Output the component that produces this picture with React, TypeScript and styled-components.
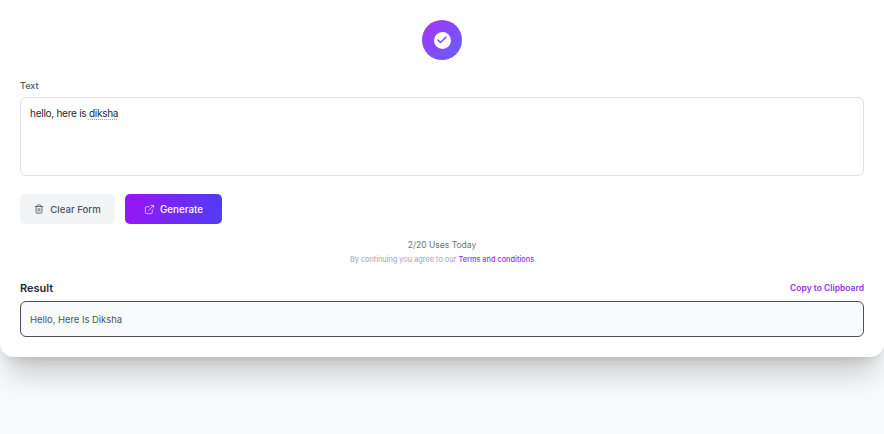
import React from 'react';
import styled, { createGlobalStyle } from 'styled-components';
import { Check, ExternalLink, Trash2 } from 'lucide-react';

const GlobalStyle = createGlobalStyle`
  html, body {
    margin: 0;
    padding: 0;
    height: 100%;
    background: #f9fafb;
    overflow: hidden;
    font-family: Inter, "Liberation Sans", sans-serif;
  }
`;

const Card = styled.main`
  box-sizing: border-box;
  height: 357px;
  padding: 20px 20px 0;
  background: #fff;
  border-radius: 0 0 14px 14px;
  box-shadow: 0 24px 30px -8px rgba(0, 0, 0, 0.2), 0 8px 12px -6px rgba(0, 0, 0, 0.12);
`;

const BadgeRow = styled.div`
  display: flex;
  justify-content: center;
  margin-bottom: 20px;
`;

const Badge = styled.div`
  display: flex;
  align-items: center;
  justify-content: center;
  width: 40px;
  height: 40px;
  border-radius: 50%;
  background: linear-gradient(135deg, #a932f5, #5f62ff);
`;

const BadgeDot = styled.div`
  display: flex;
  align-items: center;
  justify-content: center;
  width: 17px;
  height: 17px;
  border-radius: 50%;
  background: #fff;
  color: #6f4fe8;
`;

const FieldLabel = styled.label`
  display: block;
  margin-bottom: 6px;
  font-size: 9px;
  line-height: 11px;
  font-weight: 500;
  color: #4b5563;
`;

const TextBox = styled.div`
  box-sizing: border-box;
  height: 79px;
  padding: 8px 9px;
  border: 1px solid #e0e2e6;
  border-radius: 6px;
  background: #fff;
  font-size: 10px;
  letter-spacing: -0.26px;
  line-height: 14px;
  color: #1f2937;
`;

const Misspelled = styled.span`
  text-decoration: underline dotted #e58a8a;
  text-underline-offset: 2px;
`;

const Actions = styled.div`
  display: flex;
  gap: 10px;
  margin-top: 18px;
`;

const Button = styled.button<{ $primary?: boolean }>`
  display: flex;
  align-items: center;
  justify-content: center;
  gap: ${(p) => (p.$primary ? '5px' : '6px')};
  box-sizing: border-box;
  height: 30px;
  padding: 0;
  width: ${(p) => (p.$primary ? '97px' : '95px')};
  border: none;
  border-radius: 5px;
  background: ${(p) =>
    p.$primary ? 'linear-gradient(100deg, #9a14f5, #4f3cf7)' : '#f3f4f6'};
  color: ${(p) => (p.$primary ? '#fff' : '#4b5563')};
  font-family: inherit;
  font-size: ${(p) => (p.$primary ? '9.8px' : '9.6px')};
  font-weight: 500;
`;

const Usage = styled.div`
  margin-top: 15px;
  text-align: center;
  font-size: 8.5px;
  line-height: 12px;
  color: #6b7280;
`;

const Terms = styled.div`
  margin-top: 4px;
  text-align: center;
  font-size: 7.35px;
  line-height: 10px;
  color: #9ca3af;
`;

const PurpleLink = styled.a`
  color: #9333ea;
  font-weight: 500;
`;

const ResultHeader = styled.div`
  display: flex;
  align-items: center;
  justify-content: space-between;
  margin-top: 16px;
  height: 14px;
`;

const ResultTitle = styled.h2`
  margin: 0;
  font-size: 11px;
  font-weight: 600;
  color: #1f2937;
`;

const CopyLink = styled(PurpleLink)`
  font-size: 8.5px;
  font-weight: 600;
`;

const ResultBox = styled.div`
  box-sizing: border-box;
  display: flex;
  align-items: center;
  height: 36px;
  margin-top: 6px;
  padding: 0 9px;
  border: 1px solid #4b4f57;
  border-radius: 6px;
  background: #f9fafb;
  font-size: 9.5px;
  letter-spacing: -0.05px;
  color: #4b5563;
`;

const App: React.FC = () => {
  return (
    <>
      <GlobalStyle />
      <Card>
        <BadgeRow>
          <Badge>
            <BadgeDot>
              <Check size={12} strokeWidth={3} />
            </BadgeDot>
          </Badge>
        </BadgeRow>
        <FieldLabel>Text</FieldLabel>
        <TextBox>
          hello, here is <Misspelled>diksha</Misspelled>
        </TextBox>
        <Actions>
          <Button>
            <Trash2 size={10} />
            Clear Form
          </Button>
          <Button $primary>
            <ExternalLink size={11} color="#e9b8ff" />
            Generate
          </Button>
        </Actions>
        <Usage>2/20 Uses Today</Usage>
        <Terms>
          By continuing you agree to our <PurpleLink>Terms and conditions</PurpleLink>
        </Terms>
        <ResultHeader>
          <ResultTitle>Result</ResultTitle>
          <CopyLink>Copy to Clipboard</CopyLink>
        </ResultHeader>
        <ResultBox>Hello, Here Is Diksha</ResultBox>
      </Card>
    </>
  );
};

export default App;
